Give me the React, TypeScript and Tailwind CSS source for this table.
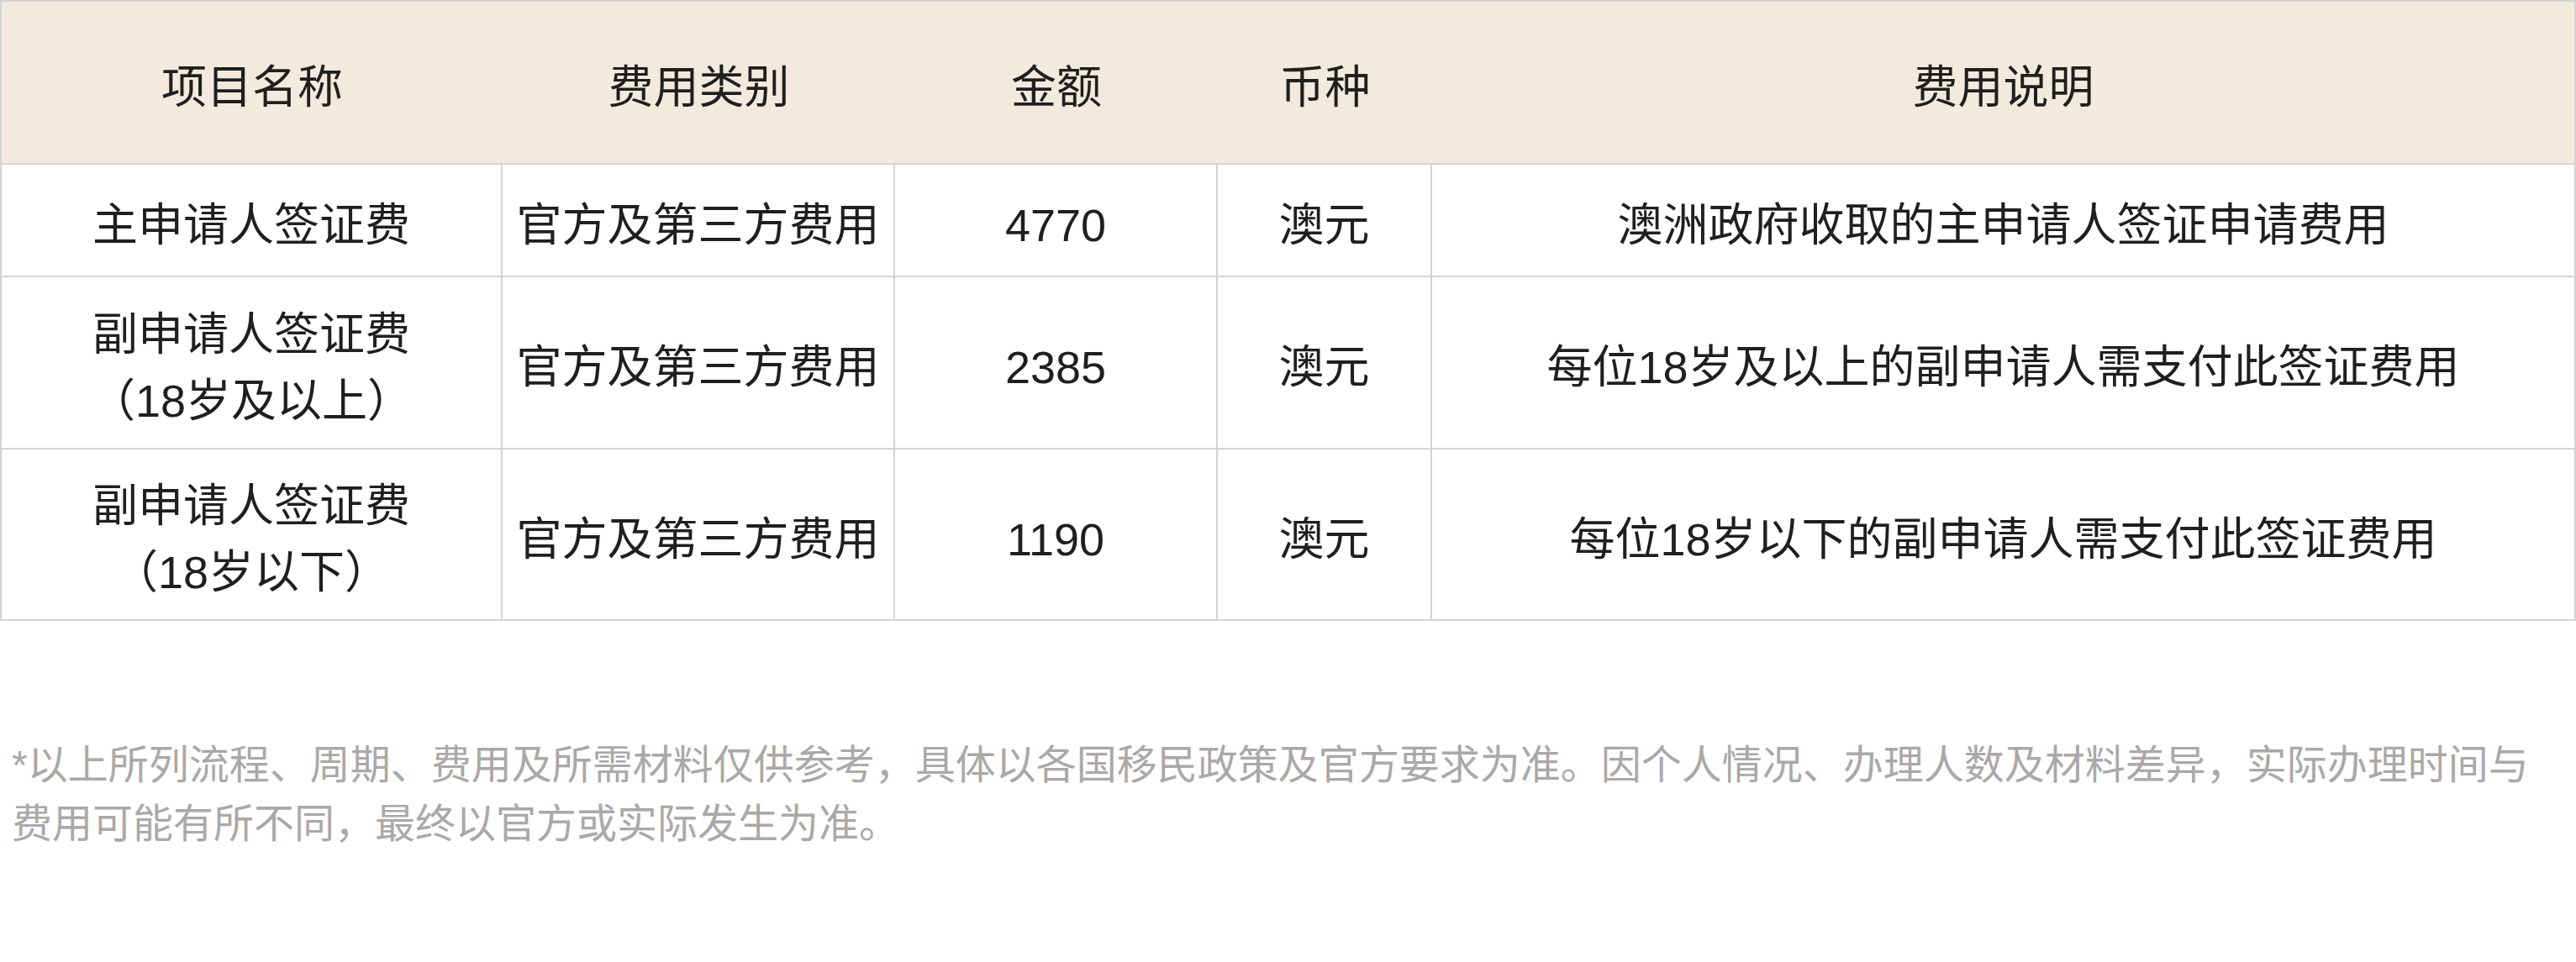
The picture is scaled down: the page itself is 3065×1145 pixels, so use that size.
import React from "react";

interface FeeRow {
  name: string[];
  category: string;
  amount: string;
  currency: string;
  note: string;
  height: string;
}

const rows: FeeRow[] = [
  {
    name: ["主申请人签证费"],
    category: "官方及第三方费用",
    amount: "4770",
    currency: "澳元",
    note: "澳洲政府收取的主申请人签证申请费用",
    height: "h-[134px]",
  },
  {
    name: ["副申请人签证费", "（18岁及以上）"],
    category: "官方及第三方费用",
    amount: "2385",
    currency: "澳元",
    note: "每位18岁及以上的副申请人需支付此签证费用",
    height: "h-[205px]",
  },
  {
    name: ["副申请人签证费", "（18岁以下）"],
    category: "官方及第三方费用",
    amount: "1190",
    currency: "澳元",
    note: "每位18岁以下的副申请人需支付此签证费用",
    height: "h-[204px]",
  },
];

const headers = ["项目名称", "费用类别", "金额", "币种", "费用说明"];

const cols = "grid grid-cols-[596px_467px_384px_255px_1fr]";
const cell =
  "flex items-center justify-center text-center pt-[12px] border-b-2 border-[#d3d3d3] [text-spacing-trim:space-all]";

const App: React.FC = () => {
  return (
    <div
      className="w-[3065px] min-h-[1145px] bg-white text-[#1f1f1f]"
      style={{ fontFamily: '"Liberation Sans", "Noto Sans CJK SC", sans-serif' }}
    >
      <div className="border-t-2 border-l-2 border-[#d3d3d3]">
        <div className={`${cols} h-[194px] bg-[#f3eadd]`}>
          {headers.map((h, i) => (
            <div
              key={i}
              className={`${cell} text-[54px] ${i === headers.length - 1 ? "border-r-2" : ""}`}
            >
              {h}
            </div>
          ))}
        </div>

        {rows.map((row, i) => (
          <div key={i} className={`${cols} ${row.height}`}>
            <div className={`${cell} border-r-2 flex-col text-[54px] leading-[79px]`}>
              {row.name.map((line, j) => (
                <span key={j}>{line}</span>
              ))}
            </div>
            <div className={`${cell} border-r-2 text-[54px]`}>{row.category}</div>
            <div className={`${cell} border-r-2 text-[54px]`}>{row.amount}</div>
            <div className={`${cell} border-r-2 text-[54px]`}>{row.currency}</div>
            <div className={`${cell} border-r-2 text-[54px]`}>{row.note}</div>
          </div>
        ))}
      </div>

      <p className="mt-[137px] px-[14px] text-[48px] leading-[70px] text-[#aaa8a8]">
        *以上所列流程、周期、费用及所需材料仅供参考，具体以各国移民政策及官方要求为准。因个人情况、办理人数及材料差异，实际办理时间与费用可能有所不同，最终以官方或实际发生为准。
      </p>
    </div>
  );
};

export default App;
